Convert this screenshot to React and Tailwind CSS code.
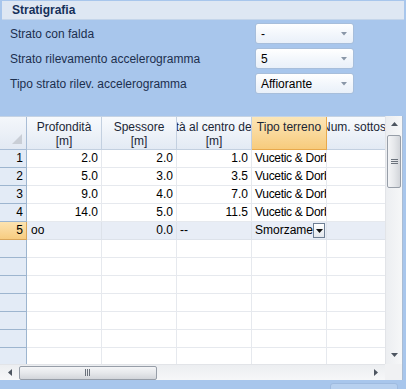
import React from "react";

const rows = [
  { n: "1", a: "2.0", b: "2.0", c: "1.0", t: "Vucetic & Dorby" },
  { n: "2", a: "5.0", b: "3.0", c: "3.5", t: "Vucetic & Dorby" },
  { n: "3", a: "9.0", b: "4.0", c: "7.0", t: "Vucetic & Dorby" },
  { n: "4", a: "14.0", b: "5.0", c: "11.5", t: "Vucetic & Dorby" },
];

function Combo({ value }) {
  return (
    <div className="w-[99px] h-[21px] rounded-[3px] border border-[#a7bedb] bg-gradient-to-b from-[#ffffff] via-[#f3f7fc] to-[#e9f0f9] flex items-center pl-[5px] pr-[6px] justify-between">
      <span className="text-[12px] text-black leading-none">{value}</span>
      <svg width="6" height="4" viewBox="0 0 6 4"><path d="M0 0h6L3 3.5z" fill="#8a97a8" /></svg>
    </div>
  );
}

function FormRow({ label, value }) {
  return (
    <div className="h-[21px] flex items-center">
      <div className="w-[255px] pl-[10px] text-[12px] text-[#1c2f4e]">{label}</div>
      <Combo value={value} />
    </div>
  );
}

function EmptyRow({ last }) {
  return (
    <div className={`flex ${last ? "h-[16px]" : "h-[18px]"}`}>
      <div className={`w-[27px] shrink-0 bg-[#e3ebf6] border-r border-[#9db5cf] ${last ? "" : "border-b"}`}></div>
      <div className={`w-[75px] shrink-0 border-r border-[#e6e9ee] ${last ? "" : "border-b"}`}></div>
      <div className={`w-[75px] shrink-0 border-r border-[#e6e9ee] ${last ? "" : "border-b"}`}></div>
      <div className={`w-[75px] shrink-0 border-r border-[#e6e9ee] ${last ? "" : "border-b"}`}></div>
      <div className={`w-[75px] shrink-0 border-r border-[#e6e9ee] ${last ? "" : "border-b"}`}></div>
      <div className={`w-[58px] shrink-0 border-[#e6e9ee] ${last ? "" : "border-b"}`}></div>
    </div>
  );
}

export default function App() {
  return (
    <div className="w-[406px] h-[389px] bg-[#a8c6ec] font-['Liberation_Sans',Arial,sans-serif] flex flex-col overflow-hidden">
      <div className="mx-[2px] mt-[1px] h-[21px] bg-[#dee7f3] border-b border-[#c4d5ea] flex items-center pl-[10px]">
        <span className="text-[12px] font-bold text-[#15305a]">Stratigrafia</span>
      </div>
      <div className="mt-[3px] flex flex-col gap-[4px]">
        <FormRow label="Strato con falda" value="-" />
        <FormRow label="Strato rilevamento accelerogramma" value="5" />
        <FormRow label="Tipo strato rilev. accelerogramma" value="Affiorante" />
      </div>

      <div className="mt-[22px] w-[403px] h-[264px] bg-white border-r border-[#a9bcd4] flex flex-col text-[12px] text-black">
        <div className="flex h-[248px]">
          <div className="w-[385px] flex flex-col overflow-hidden">
            {/* header */}
            <div className="flex h-[34px] shrink-0 border-t border-[#c5d3e4]">
              <div className="w-[27px] shrink-0 bg-gradient-to-b from-[#f4f7fb] to-[#e2e9f3] border-r border-b border-[#a9bdd6] relative">
                <svg className="absolute right-[4px] bottom-[5px]" width="10" height="10" viewBox="0 0 10 10"><path d="M10 0V10H0z" fill="#c9ced6" /></svg>
              </div>
              <div className="w-[75px] shrink-0 bg-gradient-to-b from-[#f8fafd] to-[#e3eaf4] border-r border-b border-[#c3d0e0] flex flex-col items-center pt-[3px] leading-[14px] text-[#1b2636]">
                <span>Profondità</span><span>[m]</span>
              </div>
              <div className="w-[75px] shrink-0 bg-gradient-to-b from-[#f8fafd] to-[#e3eaf4] border-r border-b border-[#c3d0e0] flex flex-col items-center pt-[3px] leading-[14px] text-[#1b2636]">
                <span>Spessore</span><span>[m]</span>
              </div>
              <div className="w-[75px] shrink-0 bg-gradient-to-b from-[#f8fafd] to-[#e3eaf4] border-r border-b border-[#c3d0e0] flex flex-col items-center pt-[3px] leading-[14px] text-[#1b2636] overflow-hidden">
                <span className="whitespace-nowrap">Profondità al centro dello strato</span><span>[m]</span>
              </div>
              <div className="w-[75px] shrink-0 bg-gradient-to-b from-[#fce6b7] to-[#f7cb7c] border-r border-b border-[#e8a94c] flex flex-col items-center pt-[3px] leading-[14px] text-[#1b2636]">
                <span>Tipo terreno</span>
              </div>
              <div className="w-[58px] shrink-0 bg-gradient-to-b from-[#f8fafd] to-[#e3eaf4] border-b border-[#c3d0e0] overflow-hidden pt-[3px] leading-[14px] text-[#1b2636]">
                <span className="whitespace-nowrap block -ml-[5px]">Num. sottostrati</span>
              </div>
            </div>
            {/* data rows */}
            {rows.map((r) => (
              <div key={r.n} className="flex h-[18px] shrink-0">
                <div className="w-[27px] shrink-0 bg-[#e3ebf6] border-r border-b border-[#9db5cf] text-right pr-[3px] leading-[17px]">{r.n}</div>
                <div className="w-[75px] shrink-0 border-r border-b border-[#e6e9ee] text-right pr-[3px] leading-[17px]">{r.a}</div>
                <div className="w-[75px] shrink-0 border-r border-b border-[#e6e9ee] text-right pr-[3px] leading-[17px]">{r.b}</div>
                <div className="w-[75px] shrink-0 border-r border-b border-[#e6e9ee] text-right pr-[3px] leading-[17px]">{r.c}</div>
                <div className="w-[75px] shrink-0 border-r border-b border-[#e6e9ee] pl-[3px] leading-[17px] overflow-hidden whitespace-nowrap tracking-[-0.3px]">{r.t}</div>
                <div className="w-[58px] shrink-0 border-b border-[#e6e9ee]"></div>
              </div>
            ))}
            {/* selected row 5 */}
            <div className="flex h-[18px] shrink-0 bg-[#e8edf6]">
              <div className="w-[27px] shrink-0 bg-gradient-to-b from-[#fce3b0] to-[#f7cc80] border-r border-b border-[#d9a65a] text-right pr-[3px] leading-[17px]">5</div>
              <div className="w-[75px] shrink-0 border-r border-b border-[#dde2ea] pl-[4px] leading-[17px]">oo</div>
              <div className="w-[75px] shrink-0 border-r border-b border-[#dde2ea] text-right pr-[3px] leading-[17px]">0.0</div>
              <div className="w-[75px] shrink-0 border-r border-b border-[#dde2ea] pl-[3px] leading-[17px]">--</div>
              <div className="w-[75px] shrink-0 border-r border-b border-[#dde2ea] pl-[3px] flex items-center justify-between pr-[1px]">
                <span className="leading-[17px]">Smorzame</span>
                <div className="w-[16px] h-[15px] border border-[#6f7f94] bg-gradient-to-b from-white to-[#e4e8ee] flex items-center justify-center">
                  <svg width="7" height="4" viewBox="0 0 7 4"><path d="M0 0h7L3.5 4z" fill="#111" /></svg>
                </div>
              </div>
              <div className="w-[58px] shrink-0 border-b border-[#dde2ea]"></div>
            </div>
            <EmptyRow /><EmptyRow /><EmptyRow /><EmptyRow /><EmptyRow /><EmptyRow />
            <EmptyRow last />
          </div>
          {/* vertical scrollbar */}
          <div className="w-[17px] bg-gradient-to-r from-[#eceef1] to-[#f6f7f8] border-l border-[#e2e4e8] flex flex-col items-center">
            <div className="h-[16px] flex items-center justify-center">
              <svg width="7" height="4" viewBox="0 0 7 4"><path d="M0 4h7L3.5 0z" fill="#4d5560" /></svg>
            </div>
            <div className="mt-[3px] w-[14px] h-[53px] rounded-[2px] border border-[#979ea8] bg-gradient-to-r from-[#f4f5f7] via-[#e6e8eb] to-[#d2d5da] flex items-center justify-center">
              <svg width="7" height="6" viewBox="0 0 7 6"><path d="M0 0.5h7M0 2.5h7M0 4.5h7" stroke="#6b727c" strokeWidth="1" /></svg>
            </div>
            <div className="flex-1"></div>
            <div className="h-[18px] flex items-center justify-center">
              <svg width="7" height="4" viewBox="0 0 7 4"><path d="M0 0h7L3.5 4z" fill="#4d5560" /></svg>
            </div>
          </div>
        </div>
        {/* horizontal scrollbar */}
        <div className="flex h-[16px]">
          <div className="w-[385px] bg-gradient-to-b from-[#eceef1] to-[#f6f7f8] border-t border-[#e2e4e8] flex items-center">
            <div className="w-[19px] flex items-center justify-center">
              <svg width="4" height="7" viewBox="0 0 4 7"><path d="M4 0v7L0 3.5z" fill="#4d5560" /></svg>
            </div>
            <div className="w-[138px] h-[14px] rounded-[2px] border border-[#979ea8] bg-gradient-to-b from-[#f4f5f7] via-[#e6e8eb] to-[#d2d5da] flex items-center justify-center">
              <svg width="6" height="7" viewBox="0 0 6 7"><path d="M0.5 0v7M2.5 0v7M4.5 0v7" stroke="#6b727c" strokeWidth="1" /></svg>
            </div>
            <div className="flex-1"></div>
            <div className="w-[18px] flex items-center justify-center">
              <svg width="4" height="7" viewBox="0 0 4 7"><path d="M0 0v7L4 3.5z" fill="#4d5560" /></svg>
            </div>
          </div>
          <div className="w-[17px] bg-[#f0f1f3]"></div>
        </div>
      </div>
      <div className="flex justify-end pr-[8px] pt-[3px]">
        <div className="w-[68px] h-[10px] rounded-t-[3px] bg-[#b7d0ef] border border-[#9fbbe0]"></div>
      </div>
    </div>
  );
}
